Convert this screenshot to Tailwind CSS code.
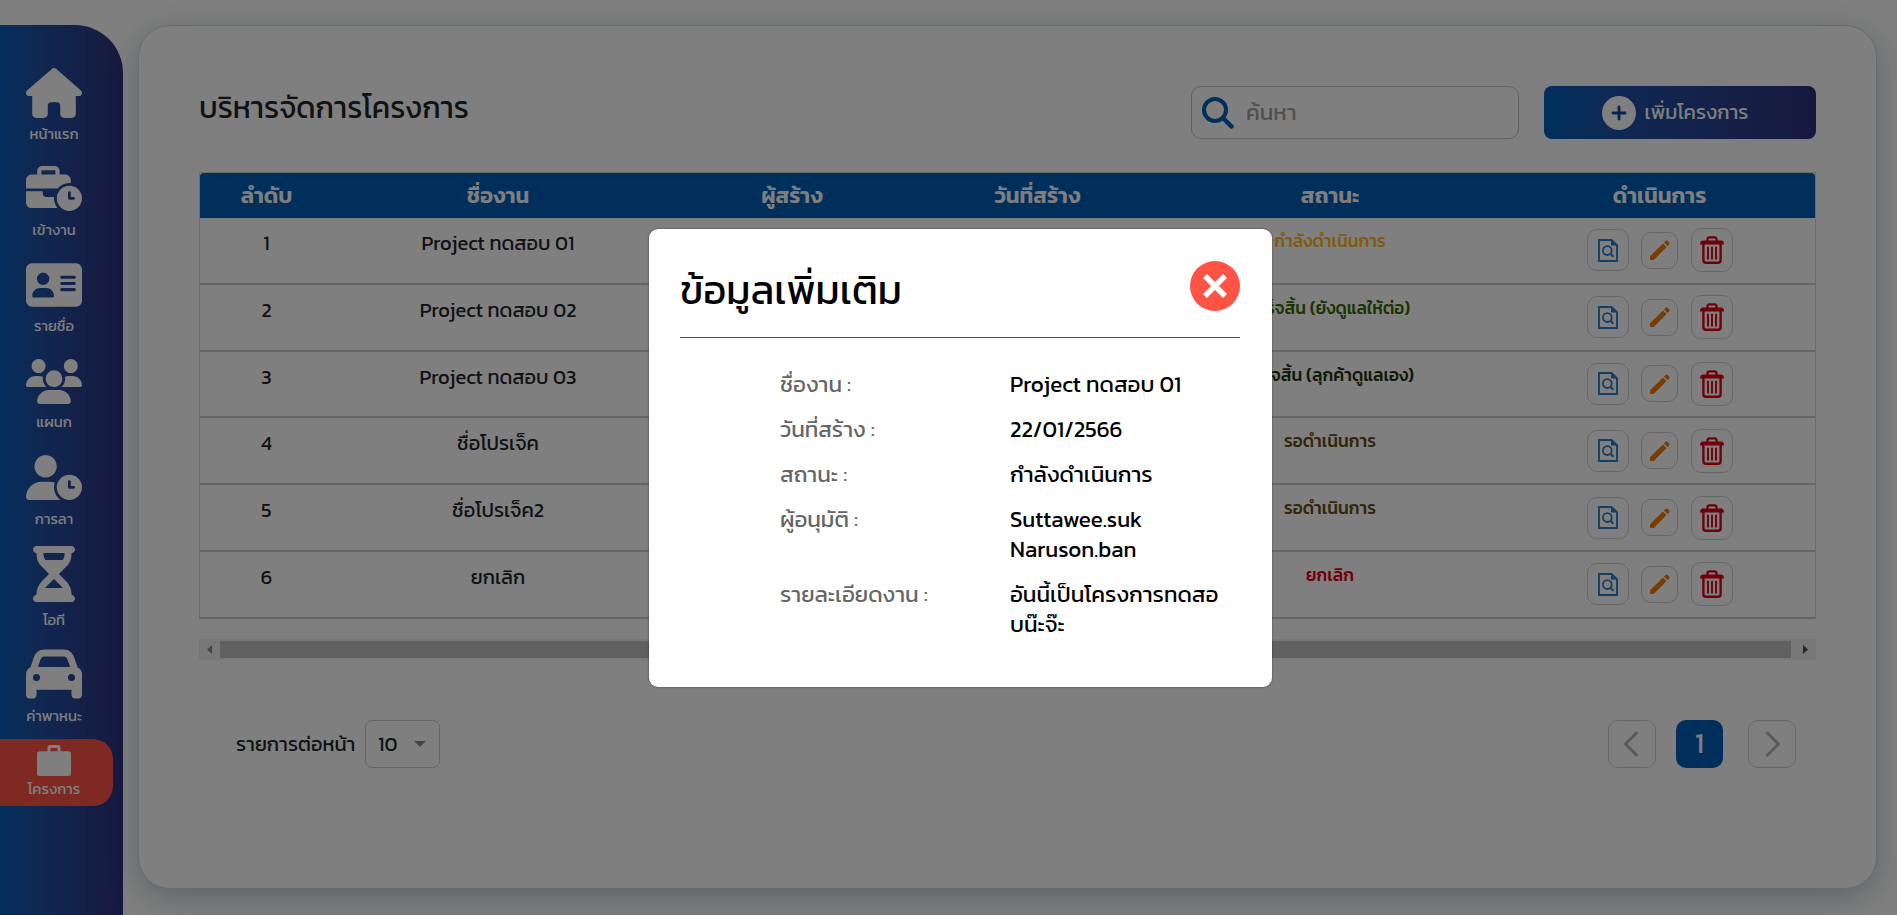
<!DOCTYPE html>
<html lang="th">
<head>
<meta charset="utf-8">
<title>บริหารจัดการโครงการ</title>
<script src="https://cdn.jsdelivr.net/npm/@tailwindcss/browser@4"></script>
</head>
<body class="relative h-[915px] w-[1897px] overflow-hidden bg-white font-[Kanit,'Noto_Sans_Thai','Noto_Sans',sans-serif] font-normal text-[#212529]">
<svg class="hidden">
  <symbol id="clock" viewBox="0 0 640 512"><path d="M640 368a144 144 0 1 0 -288 0 144 144 0 1 0 288 0zM496 288c8.8 0 16 7.2 16 16v48h32c8.8 0 16 7.2 16 16s-7.2 16-16 16H496c-8.8 0-16-7.2-16-16V304c0-8.8 7.2-16 16-16z"/></symbol>
  <symbol id="view" viewBox="0 0 20 23"><path d="M1 1H13.5L19 6.200V22H1Z" fill="none" stroke="currentColor" stroke-width="1.900"/><path d="M13 .5V6.500H19.500Z" fill="currentColor"/><circle cx="9.300" cy="11.600" r="4.400" fill="none" stroke="currentColor" stroke-width="1.800"/><path d="M12.400 14.800L15.400 17.800" stroke="currentColor" stroke-width="2"/></symbol>
  <symbol id="edit" viewBox="0 0 20 20"><path d="M0 20V16.200L13 3.400L16.600 7L3.800 20ZM14 2.400L15.600 .8Q16.600 0 17.500 .8L19.200 2.500Q20 3.400 19.200 4.400L17.600 6Z" fill="currentColor"/></symbol>
  <symbol id="trash" viewBox="0 0 24 28"><path d="M7.500 5V3.300Q7.500 1.300 9.500 1.300H14.500Q16.500 1.300 16.500 3.300V5" fill="none" stroke="currentColor" stroke-width="2.200"/><path d="M0 8.600Q0 4.600 3 4.600H21Q24 4.600 24 8.600Z" fill="currentColor"/><path d="M3.400 8V24.200Q3.400 26.800 6 26.800H18Q20.600 26.800 20.600 24.200V8" fill="none" stroke="currentColor" stroke-width="2.400"/><path d="M8 10.800V23.600M12 10.800V23.600M16 10.800V23.600" stroke="currentColor" stroke-width="1.900"/></symbol>
</svg>

<div class="flex h-[915px] pt-[25px]">
  <nav class="h-[890px] w-[123px] shrink-0 rounded-tr-[48px] bg-linear-to-r from-[#005eb8] to-[#2d327c] pt-[43px] text-[14.800px] leading-[20px] text-white">
    <div class="flex w-[108px] flex-col items-center whitespace-nowrap">
      <svg class="h-[50px] w-[56px] fill-current" viewBox="0 0 576 512"><path d="M575.8 255.5c0 18-15 32.1-32 32.1h-32l.7 160.2c0 2.7-.2 5.4-.5 8.1V472c0 22.1-17.9 40-40 40H456c-1.1 0-2.2 0-3.3-.1c-1.4 .1-2.8 .1-4.2 .1H416 392c-22.1 0-40-17.9-40-40V448 384c0-17.7-14.3-32-32-32H256c-17.7 0-32 14.3-32 32v64 24c0 22.1-17.9 40-40 40H160 128.1c-1.5 0-3-.1-4.5-.2c-1.2 .1-2.4 .2-3.6 .2H104c-22.1 0-40-17.9-40-40V360c0-.9 0-1.9 .1-2.8V287.6H32c-18 0-32-14-32-32.1c0-9 3-17 10-24L266.4 8c7-7 15-8 22-8s15 2 21 7L564.8 231.5c8 7 12 15 11 24z"/></svg>
      <span class="mt-[6px]">หน้าแรก</span>
      <svg class="mt-[22px] h-[45px] w-[56px] fill-current" viewBox="0 0 640 512"><path d="M184 48H328c4.4 0 8 3.6 8 8V96H176V56c0-4.4 3.6-8 8-8zm-56 8V96H64C28.7 96 0 124.7 0 160v96H352h8.2c32.3-39.1 81.1-64 135.8-64c5.4 0 10.7 .2 16 .7V160c0-35.3-28.7-64-64-64H384V56c0-30.9-25.1-56-56-56H184c-30.9 0-56 25.1-56 56zM320.7 352H224c-17.7 0-32-14.3-32-32V288H0V416c0 35.3 28.7 64 64 64H360.2C335.1 449.6 320 410.5 320 368c0-5.4 .2-10.7 .7-16z"/><use href="#clock" width="640" height="512"/></svg>
      <span class="mt-[9px]">เข้างาน</span>
      <svg class="mt-[20px] h-[50px] w-[56px] fill-current" viewBox="0 0 576 512"><path d="M64 32C28.7 32 0 60.7 0 96V416c0 35.3 28.7 64 64 64H512c35.3 0 64-28.7 64-64V96c0-35.3-28.7-64-64-64H64zm80 256h64c44.2 0 80 35.8 80 80c0 8.800-7.2 16-16 16H80c-8.800 0-16-7.2-16-16c0-44.2 35.8-80 80-80zm-32-96a64 64 0 1 1 128 0 64 64 0 1 1 -128 0zm256-32H496c8.8 0 16 7.2 16 16s-7.2 16-16 16H368c-8.8 0-16-7.2-16-16s7.2-16 16-16zm0 64H496c8.8 0 16 7.2 16 16s-7.2 16-16 16H368c-8.8 0-16-7.2-16-16s7.2-16 16-16zm0 64H496c8.8 0 16 7.2 16 16s-7.2 16-16 16H368c-8.8 0-16-7.2-16-16s7.2-16 16-16z"/></svg>
      <span class="mt-[6px]">รายชื่อ</span>
      <svg class="mt-[23px] h-[45px] w-[56px] fill-current" viewBox="0 0 640 512"><path d="M144 0a80 80 0 1 1 -.1 0zM512 0a80 80 0 1 1 -.1 0zM0 298.7C0 239.8 47.8 192 106.7 192h42.7c15.9 0 31 3.5 44.6 9.700c-1.3 7.2-1.9 14.7-1.9 22.3c0 38.2 16.8 72.5 43.3 96H21.3C9.6 320 0 310.400 0 298.7zM404.600 320c26.6-23.5 43.3-57.8 43.3-96c0-7.6-.7-15-1.9-22.3c13.6-6.3 28.7-9.7 44.6-9.7h42.7C592.2 192 640 239.8 640 298.7c0 11.8-9.6 21.3-21.3 21.3zM224 224a96 96 0 1 1 192 0 96 96 0 1 1 -192 0zM128 485.3C128 411.7 187.7 352 261.3 352H378.7C452.3 352 512 411.7 512 485.3c0 14.7-11.9 26.7-26.7 26.7H154.7c-14.7 0-26.7-11.9-26.7-26.7z"/></svg>
      <span class="mt-[8px]">แผนก</span>
      <svg class="mt-[23px] h-[45px] w-[56px] fill-current" viewBox="0 0 640 512"><path d="M224 0a128 128 0 1 1 -.1 0zM178.3 304h91.4c20.6 0 40.4 3.5 58.8 9.9C323 331 320 349.1 320 368c0 59.5 29.5 112.1 74.8 144H29.7C13.3 512 0 498.7 0 482.3C0 383.8 79.8 304 178.3 304z"/><use href="#clock" width="640" height="512"/></svg>
      <span class="mt-[9px]">การลา</span>
      <svg class="mt-[17px] h-[56px] w-[42px] fill-current" viewBox="0 0 384 512"><path d="M32 0C14.3 0 0 14.3 0 32S14.3 64 32 64V75c0 42.4 16.9 83.1 46.9 113.1L146.7 256 78.9 323.9C48.9 353.9 32 394.6 32 437v11c-17.7 0-32 14.3-32 32s14.3 32 32 32H352c17.7 0 32-14.3 32-32s-14.3-32-32-32V437c0-42.4-16.9-83.1-46.9-113.1L237.3 256l67.9-67.9c30-30 46.9-70.7 46.9-113.1V64c17.7 0 32-14.3 32-32s-14.3-32-32-32H32zM96 75V64H288V75c0 19-5.6 37.4-16 53H112c-10.3-15.6-16-34-16-53zm16 309c3.5-5.3 7.6-10.3 12.1-14.9L192 301.3l67.9 67.9c4.6 4.6 8.600 9.6 12.1 14.9H112z"/></svg>
      <span class="mt-[8px]">โอที</span>
      <svg class="mt-[16px] h-[56px] w-[56px] fill-current" viewBox="0 0 512 512"><path d="M135.2 117.4L109.1 192H402.9l-26.1-74.6C372.3 104.6 360.2 96 346.6 96H165.4c-13.6 0-25.7 8.6-30.2 21.4zM39.6 196.8L74.8 96.3C88.3 57.8 124.6 32 165.4 32H346.6c40.8 0 77.1 25.8 90.6 64.3l35.2 100.5c23.2 9.6 39.6 32.5 39.6 59.2V448c0 17.7-14.3 32-32 32H448c-17.7 0-32-14.3-32-32V400H96v48c0 17.7-14.3 32-32 32H32c-17.7 0-32-14.3-32-32V256c0-26.7 16.4-49.6 39.6-59.2zM128 288a32 32 0 1 0 -64 0 32 32 0 1 0 64 0zm288 32a32 32 0 1 0 0-64 32 32 0 1 0 0 64z"/></svg>
      <span class="mt-[4px]">ค่าพาหนะ</span>
    </div>
    <div class="mt-[13px] flex h-[67px] w-[113px] flex-col items-center rounded-r-[20px] bg-[#ff5346] pt-[6px] pr-[5px] whitespace-nowrap">
      <svg class="h-[31px] w-[34px]" viewBox="0 0 34 31"><path d="M12 7V2.500Q12 1.500 13 1.500H21Q22 1.500 22 2.500V7" fill="none" stroke="currentColor" stroke-width="3"/><rect y="6.200" width="34" height="24.800" rx="2.500" fill="currentColor"/></svg>
      <span class="mt-[3px]">โครงการ</span>
    </div>
  </nav>

  <main class="ml-[15px] h-[864px] w-[1739px] shrink-0 rounded-[32px] border border-[#d4d7da] bg-white px-[60px] pt-[60px] shadow-[0_8px_32px_rgba(31,60,85,0.3)]">
    <header class="flex h-[53px]">
      <h1 class="h-[44px] w-[992px] text-[30px] leading-[44px] whitespace-nowrap">บริหารจัดการโครงการ</h1>
      <div class="flex h-[53px] w-[328px] items-center rounded-[10px] border border-[#c4c4c4] pl-[10px]">
        <svg class="size-[32px] text-[#005eb8]" viewBox="0 0 32 32" fill="none" stroke="currentColor"><circle cx="13" cy="13" r="11" stroke-width="4"/><path d="M21 21L29.500 29.500" stroke-width="4.500" stroke-linecap="round"/></svg>
        <span class="ml-[12px] text-[22.400px] text-[#a0a0a0]">ค้นหา</span>
      </div>
      <button class="ml-[25px] flex h-[53px] w-[272px] items-center justify-center rounded-[8px] bg-linear-to-r from-[#005eb8] to-[#2d327c] pr-[10px] text-[20px] whitespace-nowrap text-white">
        <svg class="mr-[9px] size-[34px]" viewBox="0 0 34 34"><circle cx="17" cy="17" r="17" fill="#fff"/><path d="M17 11V23M11 17H23" stroke="#0c4da0" stroke-width="2.800" stroke-linecap="round"/></svg>
        <span class="pb-[2px]">เพิ่มโครงการ</span>
      </button>
    </header>

    <section class="mt-[33px] h-[447px] w-[1617px] border-x border-t border-[#d8d8d8]">
      <div class="grid h-[45px] grid-cols-[133px_330px_258px_233px_352px_1fr] items-center rounded-t-[4px] bg-[#005eb8] text-center text-[22px] leading-[44px] font-semibold text-white">
        <span>ลำดับ</span><span>ชื่องาน</span><span>ผู้สร้าง</span><span>วันที่สร้าง</span><span>สถานะ</span><span class="pr-[2px]">ดำเนินการ</span>
      </div>
      <div id="rows"></div>
    </section>
    <div class="mt-[20px] flex h-[21px] w-[1617px] items-center bg-[#f1f1f1]">
      <svg class="mx-[8px] h-[9px] w-[5px]" viewBox="0 0 5 9"><path d="M5 0V9L0 4.500Z" fill="#8b8b8b"/></svg>
      <div class="h-[17px] w-[1571px] bg-[#c1c1c1]"></div>
      <svg class="ml-[12px] h-[9px] w-[5px]" viewBox="0 0 5 9"><path d="M0 0V9L5 4.500Z" fill="#505050"/></svg>
    </div>
    <footer class="mt-[60px] flex h-[48px] w-[1617px] items-center pr-[20px] pl-[37px]">
      <span class="w-[129px] pb-[1px] text-[20px] whitespace-nowrap">รายการต่อหน้า</span>
      <div class="flex h-[48px] w-[75px] items-center rounded-[7px] border border-[#c5cbd3] pl-[12px] text-[20px]">
        <span class="w-[36px] pb-[1px]">10</span>
        <svg class="h-[6px] w-[12px]" viewBox="0 0 12 6"><path d="M0 0H12L6 6Z" fill="#8a8a8a"/></svg>
      </div>
      <div class="ml-auto flex items-center">
        <div class="flex size-[48px] items-center justify-center rounded-[10px] border border-[#cfcfcf]"><svg class="mr-[3px] h-[26px] w-[15px]" viewBox="0 0 15 26"><path d="M13.500 2L2.500 13L13.500 24" fill="none" stroke="#b4b4b4" stroke-width="3" stroke-linecap="round"/></svg></div>
        <div class="ml-[20px] flex h-[48px] w-[47px] items-center justify-center rounded-[10px] bg-[#005eb8] pb-[2px] text-[28px] text-white">1</div>
        <div class="ml-[25px] flex size-[48px] items-center justify-center rounded-[10px] border border-[#cfcfcf]"><svg class="ml-[3px] h-[26px] w-[15px]" viewBox="0 0 15 26"><path d="M1.500 2L12.500 13L1.500 24" fill="none" stroke="#b4b4b4" stroke-width="3" stroke-linecap="round"/></svg></div>
      </div>
    </footer>
  </main>
</div>

<div class="absolute inset-0 bg-black/50">
  <div class="absolute top-[229px] left-[649px] h-[458px] w-[623px] rounded-[9px] bg-white pr-[32px] pl-[31px] text-black shadow-[0_0_2px_rgba(0,0,0,0.6)]">
    <div class="flex h-[109px] items-start justify-between border-b border-[#1160b8] pt-[32px]">
      <h2 class="text-[40px] leading-[58px] whitespace-nowrap">ข้อมูลเพิ่มเติม</h2>
      <svg class="size-[50px]" viewBox="0 0 50 50"><circle cx="25" cy="25" r="25" fill="#ff5346"/><path d="M15 15L35 35M35 15L15 35" stroke="#fff" stroke-width="5.500"/></svg>
    </div>
    <dl class="grid grid-cols-[230px_1fr] gap-y-[15px] pt-[31px] pl-[100px] text-[22.400px] leading-[30px] whitespace-nowrap [&_dt]:text-[#666]">
      <dt>ชื่องาน :</dt><dd>Project ทดสอบ 01</dd>
      <dt>วันที่สร้าง :</dt><dd>22/01/2566</dd>
      <dt>สถานะ :</dt><dd>กำลังดำเนินการ</dd>
      <dt>ผู้อนุมัติ :</dt><dd>Suttawee.suk<br>Naruson.ban</dd>
      <dt>รายละเอียดงาน :</dt><dd>อันนี้เป็นโครงการทดสอ<br>บน๊ะจ๊ะ</dd>
    </dl>
  </div>
</div>

<script>
const rows = [
  ["Project ทดสอบ 01", "กำลังดำเนินการ", "#ffb91a"],
  ["Project ทดสอบ 02", "เสร็จสิ้น (ยังดูแลให้ต่อ)", "#346a00"],
  ["Project ทดสอบ 03", "เสร็จสิ้น (ลุกค้าดูแลเอง)", "#1c3508"],
  ["ชื่อโปรเจ็ค", "รอดำเนินการ", "#6a4a10"],
  ["ชื่อโปรเจ็ค2", "รอดำเนินการ", "#6a4a10"],
  ["ยกเลิก", "ยกเลิก", "#e60012"],
];
document.getElementById("rows").innerHTML = rows.map(([name, status, color], i) => `
  <div class="grid h-[66.8px] grid-cols-[133px_330px_258px_233px_352px_1fr] border-b-2 border-[#cbcbcb] text-center text-[20px] whitespace-nowrap">
    <span class="pt-[11px] leading-[28px]">${i + 1}</span>
    <span class="pt-[11px] leading-[28px]">${name}</span><span></span><span></span>
    <span class="pt-[9px] text-[17.400px] leading-[28px] font-medium" style="color:${color}">${status}</span>
    <span class="flex items-center justify-center gap-[12.500px] pr-[2px]">
      <span class="flex size-[42px] items-center justify-center rounded-[10px] border border-[#cfcfcf] text-[#2f7cc9]"><svg class="h-[23px] w-[20px]"><use href="#view"/></svg></span>
      <span class="flex size-[37px] items-center justify-center rounded-[10px] border border-[#cfcfcf] text-[#f0790a]"><svg class="size-[20px]"><use href="#edit"/></svg></span>
      <span class="flex h-[44px] w-[42px] items-center justify-center rounded-[10px] border border-[#cfcfcf] text-[#e00010]"><svg class="h-[28px] w-[24px]"><use href="#trash"/></svg></span>
    </span>
  </div>`).join("");
</script>
</body>
</html>
